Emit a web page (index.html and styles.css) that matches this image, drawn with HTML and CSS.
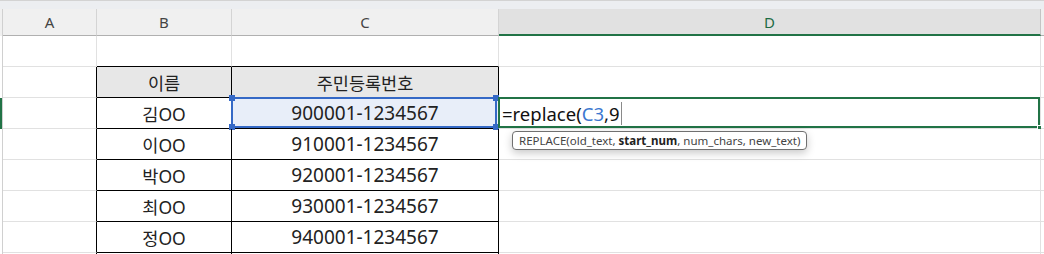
FILE: index.html
```html
<!DOCTYPE html>
<html lang="ko">
<head>
    <meta charset="UTF-8">
    <title>주민등록번호</title>
    <link rel="stylesheet" href="styles.css">
</head>
<body>
    <div class="strip"></div>

    <div class="sheet">
        <div class="line head">
            <div class="rh"></div>
            <div class="ch">A</div>
            <div class="ch">B</div>
            <div class="ch">C</div>
            <div class="ch on">D</div>
            <div class="ch end"></div>
        </div>

        <div class="line">
            <div class="rh"></div>
            <div class="cell"></div>
            <div class="cell top"></div>
            <div class="cell top"></div>
            <div class="cell"></div>
            <div class="cell end"></div>
        </div>

        <div class="line">
            <div class="rh"></div>
            <div class="cell edge"></div>
            <div class="cell tb th name">이름</div>
            <div class="cell tb th name">주민등록번호</div>
            <div class="cell"></div>
            <div class="cell end"></div>
        </div>

        <div class="line">
            <div class="rh on"></div>
            <div class="cell edge"></div>
            <div class="cell tb name">김OO</div>
            <div class="cell tb num picked">
                900001-1234567
                <div class="sel">
                    <span class="h tl"></span>
                    <span class="h tr"></span>
                    <span class="h bl"></span>
                    <span class="h br"></span>
                </div>
            </div>
            <div class="cell edit">
                <span>=replace(<span class="ref">C3</span>,9</span><span class="caret"></span>
                <div class="box"><span class="fill"></span></div>
                <div class="tip">REPLACE(old_text, <b>start_num</b>, num_chars, new_text)</div>
            </div>
            <div class="cell end"></div>
        </div>

        <div class="line">
            <div class="rh"></div>
            <div class="cell edge"></div>
            <div class="cell tb name">이OO</div>
            <div class="cell tb num">910001-1234567</div>
            <div class="cell"></div>
            <div class="cell end"></div>
        </div>

        <div class="line">
            <div class="rh"></div>
            <div class="cell edge"></div>
            <div class="cell tb name">박OO</div>
            <div class="cell tb num">920001-1234567</div>
            <div class="cell"></div>
            <div class="cell end"></div>
        </div>

        <div class="line">
            <div class="rh"></div>
            <div class="cell edge"></div>
            <div class="cell tb name">최OO</div>
            <div class="cell tb num">930001-1234567</div>
            <div class="cell"></div>
            <div class="cell end"></div>
        </div>

        <div class="line">
            <div class="rh"></div>
            <div class="cell edge"></div>
            <div class="cell tb name">정OO</div>
            <div class="cell tb num">940001-1234567</div>
            <div class="cell"></div>
            <div class="cell end"></div>
        </div>

        <div class="line last">
            <div class="rh"></div>
            <div class="cell edge"></div>
            <div class="cell tb"></div>
            <div class="cell tb"></div>
            <div class="cell"></div>
            <div class="cell end"></div>
        </div>
    </div>
</body>
</html>
```

FILE: styles.css
```css
* {
    box-sizing: border-box;
}
body {
    margin: 0;
    font-family: "Noto Sans", "Noto Sans CJK KR", sans-serif;
    color: #222;
    background: #fff;
    overflow: hidden;
}
.sheet {
    height: 245px;
    overflow: hidden;
}
.strip {
    height: 9px;
    background: #eceef1;
    border-top: 1px solid #d3d3d3;
}
.line {
    display: grid;
    grid-template-columns: 3px 94px 135px 267px 542px 1fr;
    height: 31px;
}
.line.head {
    height: 27px;
}
.rh {
    border-right: 1px solid #d0d0d0;
}
.head .rh {
    background: #f0f0f0;
}
.rh.on {
    background: #217346;
}
.ch {
    display: flex;
    align-items: center;
    justify-content: center;
    background: #f0f0f0;
    border-right: 1px solid #d4d4d4;
    border-bottom: 1px solid #b0b0b0;
    font-size: 15px;
    color: #444;
}
.ch.on {
    background: #e1e1e1;
    color: #1d6b44;
    border-bottom: 2px solid #217346;
    border-right-color: #c4c4c4;
}
.ch.end {
    border-right: none;
}
.cell {
    position: relative;
    display: flex;
    align-items: center;
    justify-content: center;
    border-right: 1px solid #e1e1e1;
    border-bottom: 1px solid #e1e1e1;
    white-space: nowrap;
}
.cell.end {
    border-right: none;
}
.cell.top {
    border-bottom-color: #000;
}
.cell.edge {
    border-right-color: #000;
}
.cell.tb {
    border-right-color: #000;
    border-bottom-color: #000;
}
.cell.th {
    background: #e7e7e7;
}
.name {
    font-size: 17.5px;
}
.num {
    font-size: 19px;
}
.picked {
    background: #e8eef9;
}
.sel {
    position: absolute;
    top: -1px;
    left: -1px;
    right: 1px;
    bottom: 0;
    border: 2px solid #3569c6;
}
.h {
    position: absolute;
    width: 6px;
    height: 6px;
    background: #3569c6;
}
.h.tl { top: -4px; left: -4px; }
.h.tr { top: -4px; right: -4px; }
.h.bl { bottom: -4px; left: -4px; }
.h.br { bottom: -4px; right: -4px; }
.edit {
    justify-content: flex-start;
    padding-left: 3px;
    font-size: 18.5px;
    color: #111;
}
.ref {
    color: #3b78d0;
}
.caret {
    display: inline-block;
    width: 1px;
    height: 23px;
    margin-left: 1px;
    background: #8a8a8a;
}
.box {
    position: absolute;
    top: -1px;
    left: -1px;
    right: 0;
    bottom: 0;
    border: 2px solid #217346;
}
.fill {
    position: absolute;
    right: -4px;
    bottom: -4px;
    width: 5px;
    height: 5px;
    background: #217346;
    border: 1px solid #fff;
}
.tip {
    position: absolute;
    top: 33px;
    left: 13px;
    z-index: 2;
    height: 19px;
    padding: 0 6px;
    border: 1px solid #707070;
    border-radius: 4px;
    background: #fff;
    box-shadow: 0 3px 8px rgba(0, 0, 0, 0.22);
    font-size: 11.5px;
    line-height: 17px;
    color: #444;
}
.tip b {
    color: #222;
}
```
